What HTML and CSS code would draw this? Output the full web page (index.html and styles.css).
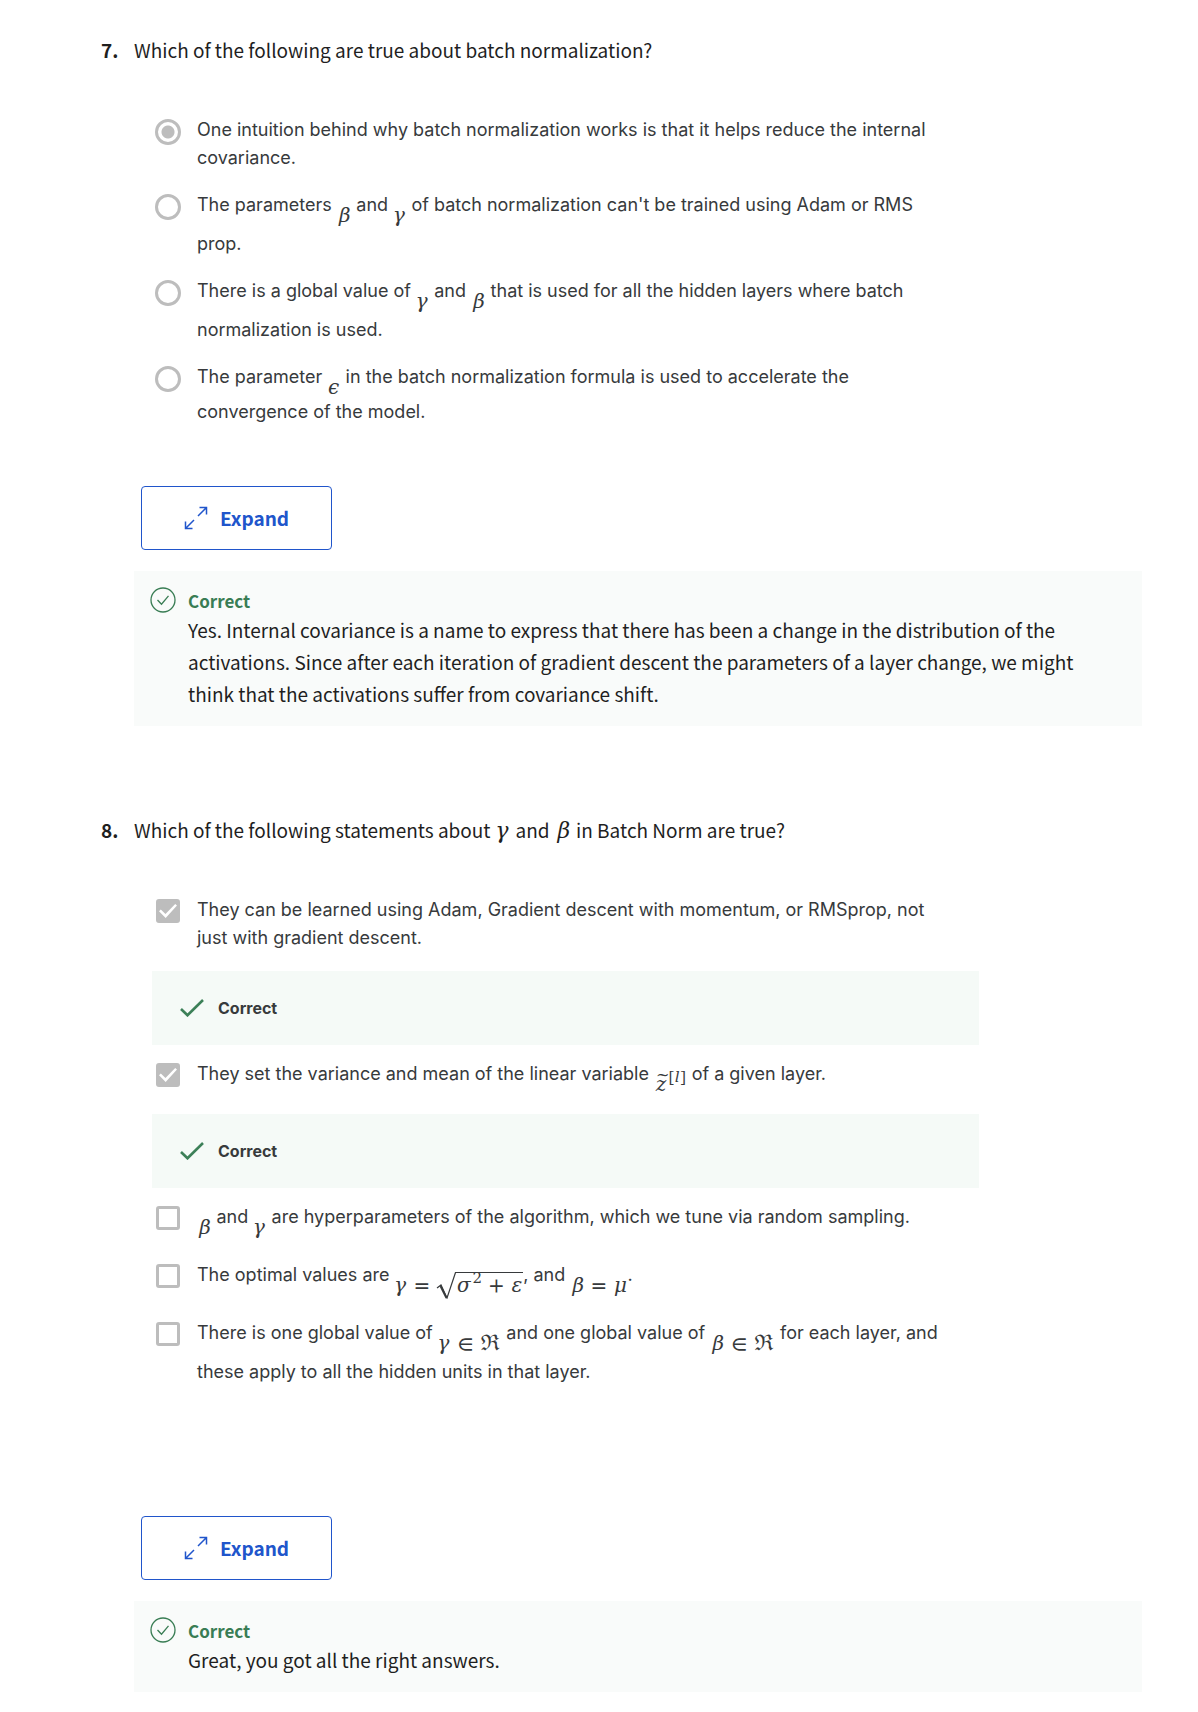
FILE: index.html
```html
<!DOCTYPE html>
<html lang="en">
<head>
<meta charset="utf-8">
<meta name="viewport" content="width=device-width, initial-scale=1">
<title>Quiz feedback</title>
<link rel="stylesheet" href="styles.css">
</head>
<body>
<svg class="sprite" aria-hidden="true">
  <symbol id="expand" viewBox="0 0 24 24"><path d="M14 10 22.500 1.500M15.500 1.500h7v7M10 14 1.500 22.500M1.500 15.500v7h7" fill="none" stroke="currentColor" stroke-width="1.500"/></symbol>
  <symbol id="circle-check" viewBox="0 0 26 26"><circle cx="13" cy="13" r="12" fill="none" stroke="currentColor" stroke-width="1.300"/><path d="m7.500 13 4 4.200 7-8.400" fill="none" stroke="currentColor" stroke-width="1.300"/></symbol>
  <symbol id="check" viewBox="0 0 24 18"><path d="m1 10 6.500 6.300L23 1" fill="none" stroke="currentColor" stroke-width="2.600"/></symbol>
</svg>
<main class="quiz">
  <section class="question">
    <span class="number">7.</span>
    <div class="body">
      <h2 class="prompt" id="q7">Which of the following are true about batch normalization?</h2>
      <div class="options" role="radiogroup" aria-labelledby="q7">
        <label class="option"><input class="control radio" type="radio" name="q7" checked disabled><span class="text">One intuition behind why batch normalization works is that it helps reduce the internal covariance.</span></label>
        <label class="option"><input class="control radio" type="radio" name="q7" disabled><span class="text">The parameters <span class="math">𝛽</span> and <span class="math">𝛾</span> of batch normalization can't be trained using Adam or RMS prop.</span></label>
        <label class="option"><input class="control radio" type="radio" name="q7" disabled><span class="text">There is a global value of <span class="math">𝛾</span> and <span class="math">𝛽</span> that is used for all the hidden layers where batch normalization is used.</span></label>
        <label class="option"><input class="control radio" type="radio" name="q7" disabled><span class="text">The parameter <span class="math short">𝜖</span> in the batch normalization formula is used to accelerate the convergence of the model.</span></label>
      </div>
      <button class="expand" type="button"><svg class="expand-icon" aria-hidden="true"><use href="#expand"/></svg>Expand</button>
      <div class="feedback">
        <svg class="feedback-icon" aria-hidden="true"><use href="#circle-check"/></svg>
        <div>
          <strong class="verdict">Correct</strong>
          <p class="explanation">Yes. Internal covariance is a name to express that there has been a change in the distribution of the activations. Since after each iteration of gradient descent the parameters of a layer change, we might think that the activations suffer from covariance shift.</p>
        </div>
      </div>
    </div>
  </section>

  <section class="question">
    <span class="number">8.</span>
    <div class="body">
      <h2 class="prompt" id="q8">Which of the following statements about <span class="symbol">𝛾</span> and <span class="symbol">𝛽</span> in Batch Norm are true?</h2>
      <div class="options multiple" role="group" aria-labelledby="q8">
        <label class="option"><input class="control box" type="checkbox" checked disabled><span class="text">They can be learned using Adam, Gradient descent with momentum, or RMSprop, not just with gradient descent.</span></label>
        <p class="result"><svg class="result-icon" aria-hidden="true"><use href="#check"/></svg>Correct</p>
        <label class="option"><input class="control box" type="checkbox" checked disabled><span class="text">They set the variance and mean of the linear variable <span class="math short"><span class="accented">𝑧<span class="tilde">~</span></span><sup class="power">[𝑙]</sup></span> of a given layer.</span></label>
        <p class="result"><svg class="result-icon" aria-hidden="true"><use href="#check"/></svg>Correct</p>
        <label class="option"><input class="control box" type="checkbox" disabled><span class="text"><span class="math">𝛽</span> and <span class="math">𝛾</span> are hyperparameters of the algorithm, which we tune via random sampling.</span></label>
        <label class="option"><input class="control box" type="checkbox" disabled><span class="text">The optimal values are <span class="math">𝛾 = <span class="root"><svg class="radical" viewBox="0 0 20 27" aria-hidden="true"><path d="m1 16 4-3 6 13L19.500.500H20" fill="none" stroke="currentColor" stroke-width="1.200"/><path d="m4.500 14 6 12" stroke="currentColor" stroke-width="2"/></svg><span class="radicand">𝜎<sup class="power">2</sup> + 𝜀</span></span></span>, and <span class="math">𝛽 = 𝜇</span>.</span></label>
        <label class="option"><input class="control box" type="checkbox" disabled><span class="text">There is one global value of <span class="math">𝛾 ∈ ℜ</span> and one global value of <span class="math">𝛽 ∈ ℜ</span> for each layer, and these apply to all the hidden units in that layer.</span></label>
      </div>
      <button class="expand" type="button"><svg class="expand-icon" aria-hidden="true"><use href="#expand"/></svg>Expand</button>
      <div class="feedback">
        <svg class="feedback-icon" aria-hidden="true"><use href="#circle-check"/></svg>
        <div>
          <strong class="verdict">Correct</strong>
          <p class="explanation">Great, you got all the right answers.</p>
        </div>
      </div>
    </div>
  </section>
</main>
</body>
</html>
```
FILE: styles.css
```css
* { box-sizing: border-box; }

body {
  margin: 0;
  background: #fff;
  color: #1f1f1f;
  font-family: "Noto Sans CJK SC", "Open Sans", sans-serif;
  font-size: 19px;
  line-height: 32px;
}

.sprite { display: none; }

.quiz {
  display: flex;
  flex-direction: column;
  gap: 88px;
  padding: 34px 56px 21px 101px;
}

.question { display: flex; }
.number { flex: 0 0 33px; font-weight: 700; }
.body { flex: 1; min-width: 0; }
.prompt { margin: 0 0 50px; font-size: inherit; font-weight: 400; }
.symbol { margin: 0 1px; font-family: "DejaVu Math TeX Gyre", "Liberation Serif", serif; font-size: 22px; line-height: 1; }

.options {
  display: flex;
  flex-direction: column;
  gap: 19px;
  max-width: 845px;
  margin-bottom: 60px;
  padding: 0 0 0 18px;
  color: #373a3c;
  font-family: Inter, "Liberation Sans", sans-serif;
  font-size: 18px;
  line-height: 28px;
}
.multiple { margin-bottom: 130px; }

.option { display: flex; align-items: flex-start; gap: 16px; padding: 0 28px 0 3px; }
.text { flex: 1; min-width: 0; }

.control {
  flex: none;
  appearance: none;
  width: 26px;
  height: 26px;
  margin: 3px 0 0;
  border: 3px solid #bdbdbd;
  background: #fff;
}
.radio { border-radius: 50%; }
.radio:checked { background: radial-gradient(circle, #bdbdbd 6px, #fff 7px); }
.box { width: 24px; height: 24px; margin: 3px 1px 0; border-radius: 3px; }
.box:checked {
  background: #bdbdbd;
  display: grid;
  place-items: center;
}
.box:checked::after {
  content: "";
  width: 18px;
  height: 14px;
  background: #fff;
  clip-path: polygon(0 52%, 10% 40%, 36% 72%, 90% 0, 100% 10%, 37% 100%);
}

.math {
  display: inline-block;
  vertical-align: -11px;
  font-family: "DejaVu Math TeX Gyre", "Liberation Serif", serif;
  font-size: 20px;
  line-height: 28px;
  white-space: nowrap;
}
.short { line-height: 20px; }
.accented { position: relative; }
.tilde { position: absolute; left: 2px; top: -8px; font-size: 16px; line-height: 1; }
.power { font-size: 15px; line-height: 0; vertical-align: 9px; }
.root { display: inline-flex; align-items: flex-start; line-height: 26px; }
.radical { width: 20px; height: 27px; }
.radicand { align-self: baseline; border-top: 1px solid; }

.result {
  display: flex;
  align-items: center;
  gap: 14px;
  height: 74px;
  margin: 0 0 -4px;
  padding: 0 28px;
  background: #f5faf7;
  font-size: 16px;
  font-weight: 700;
}
.result-icon { width: 24px; height: 18px; color: #3c8058; }

.expand {
  display: flex;
  align-items: center;
  justify-content: center;
  gap: 12px;
  width: 191px;
  height: 64px;
  margin: 0 0 21px 7px;
  border: 1px solid #2055cb;
  border-radius: 4px;
  background: #fff;
  color: #2055cb;
  font: inherit;
  font-weight: 700;
}
.expand-icon { width: 24px; height: 24px; }

.feedback {
  display: flex;
  gap: 12px;
  padding: 16px 60px 16px 16px;
  background: #f9fbfa;
}
.feedback-icon { flex: none; width: 26px; height: 26px; color: #397d54; }
.verdict { display: block; color: #397d54; font-size: 17px; line-height: 27px; }
.explanation { margin: 0; }
```
